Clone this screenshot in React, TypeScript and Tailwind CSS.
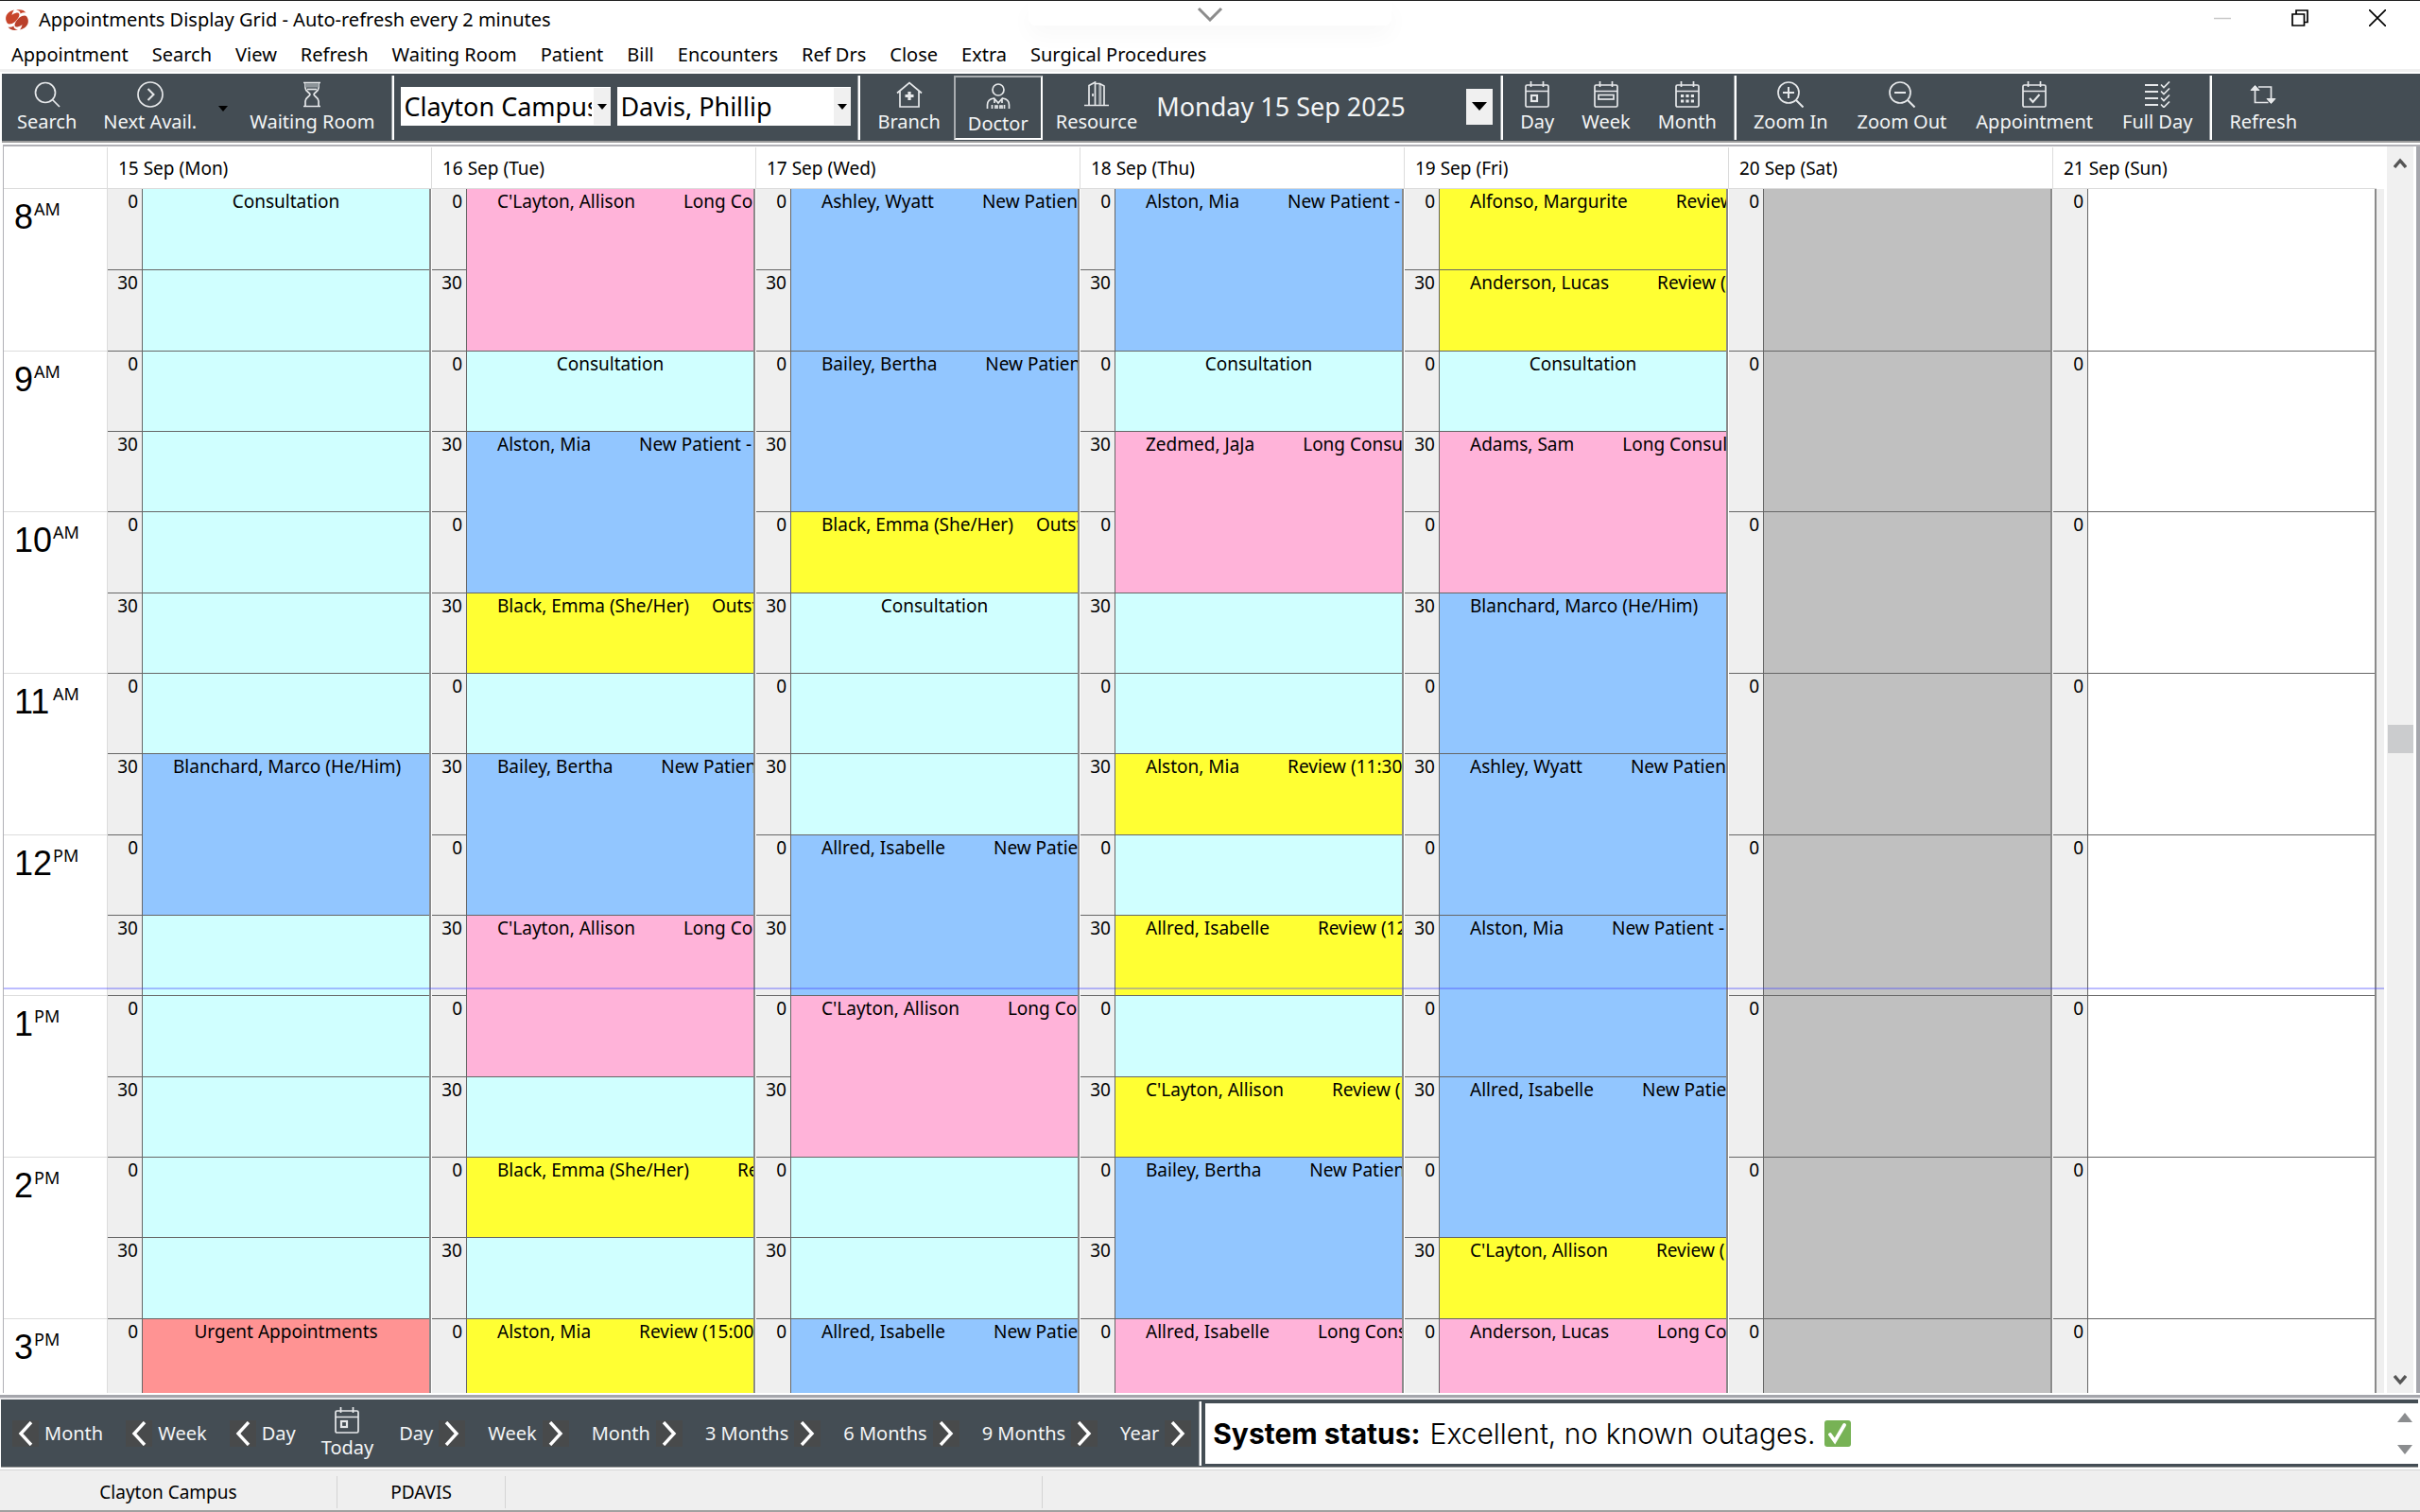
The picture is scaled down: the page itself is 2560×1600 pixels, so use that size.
import type { ReactNode } from "react";

type Tone = "open" | "long" | "new" | "review" | "urgent" | "closed" | "blank";

interface Slot {
  span: number;
  tone: Tone;
  title?: string;
  name?: string;
  type?: string;
}

interface Day {
  label: string;
  step: number;
  slots: Slot[];
}

const toneClass: Record<Tone, string> = {
  open: "bg-[#d0ffff]",
  long: "bg-[#ffb3d9]",
  new: "bg-[#92c6ff]",
  review: "bg-[#ffff33]",
  urgent: "bg-[#ff9393]",
  closed: "bg-[#c0c0c0]",
  blank: "bg-white",
};

const open = (title?: string): Slot => ({ span: 1, tone: "open", title });
const longConsult = (name: string, span = 2): Slot => ({
  span,
  tone: "long",
  name,
  type: "Long Consultation",
});
const newPatient = (name: string, type = "New Patient - Consult", span = 2): Slot => ({
  span,
  tone: "new",
  name,
  type,
});
const review = (name: string, type: string): Slot => ({
  span: 1,
  tone: "review",
  name,
  type,
});
const hours = (tone: Tone): Slot[] =>
  [2, 2, 2, 2, 2, 2, 2, 1].map((span) => ({ span, tone }));

const days: Day[] = [
  {
    label: "15 Sep (Mon)",
    step: 1,
    slots: [
      open("Consultation"),
      open(),
      open(),
      open(),
      open(),
      open(),
      open(),
      newPatient("Blanchard, Marco (He/Him)", ""),
      open(),
      open(),
      open(),
      open(),
      open(),
      { span: 1, tone: "urgent", title: "Urgent Appointments" },
    ],
  },
  {
    label: "16 Sep (Tue)",
    step: 1,
    slots: [
      longConsult("C'Layton, Allison"),
      open("Consultation"),
      newPatient("Alston, Mia"),
      review("Black, Emma (She/Her)", "Outstanding"),
      open(),
      newPatient("Bailey, Bertha"),
      longConsult("C'Layton, Allison"),
      open(),
      review("Black, Emma (She/Her)", "Review (14:00)"),
      open(),
      review("Alston, Mia", "Review (15:00)"),
    ],
  },
  {
    label: "17 Sep (Wed)",
    step: 1,
    slots: [
      newPatient("Ashley, Wyatt"),
      newPatient("Bailey, Bertha"),
      review("Black, Emma (She/Her)", "Outstanding"),
      open("Consultation"),
      open(),
      open(),
      newPatient("Allred, Isabelle"),
      longConsult("C'Layton, Allison"),
      open(),
      open(),
      newPatient("Allred, Isabelle", "New Patient", 1),
    ],
  },
  {
    label: "18 Sep (Thu)",
    step: 1,
    slots: [
      newPatient("Alston, Mia"),
      open("Consultation"),
      longConsult("Zedmed, JaJa"),
      open(),
      open(),
      review("Alston, Mia", "Review (11:30)"),
      open(),
      review("Allred, Isabelle", "Review (12:30)"),
      open(),
      review("C'Layton, Allison", "Review (13:30)"),
      newPatient("Bailey, Bertha"),
      longConsult("Allred, Isabelle", 1),
    ],
  },
  {
    label: "19 Sep (Fri)",
    step: 1,
    slots: [
      review("Alfonso, Margurite", "Review (8:00)"),
      review("Anderson, Lucas", "Review (8:30)"),
      open("Consultation"),
      longConsult("Adams, Sam"),
      newPatient("Blanchard, Marco (He/Him)", ""),
      newPatient("Ashley, Wyatt"),
      newPatient("Alston, Mia"),
      newPatient("Allred, Isabelle"),
      review("C'Layton, Allison", "Review (14:30)"),
      longConsult("Anderson, Lucas", 1),
    ],
  },
  { label: "20 Sep (Sat)", step: 2, slots: hours("closed") },
  { label: "21 Sep (Sun)", step: 2, slots: hours("blank") },
];

const hourLabels = [
  ["8", "AM"],
  ["9", "AM"],
  ["10", "AM"],
  ["11", "AM"],
  ["12", "PM"],
  ["1", "PM"],
  ["2", "PM"],
  ["3", "PM"],
];

const menus = [
  "Appointment",
  "Search",
  "View",
  "Refresh",
  "Waiting Room",
  "Patient",
  "Bill",
  "Encounters",
  "Ref Drs",
  "Close",
  "Extra",
  "Surgical Procedures",
];

/* ---------- icons ---------- */

function Icon({ children }: { children: ReactNode }) {
  return (
    <svg
      viewBox="0 0 28 28"
      className="size-7 shrink-0"
      fill="none"
      stroke="#e6e8ea"
      strokeWidth="1.7"
      aria-hidden="true"
    >
      {children}
    </svg>
  );
}

const SearchIcon = () => (
  <Icon>
    <circle cx="12" cy="12" r="10.5" />
    <path d="M19.5 19.5 27 27" />
  </Icon>
);

const NextIcon = () => (
  <Icon>
    <circle cx="14" cy="14" r="13" />
    <path d="m11.500 8 6 6-6 6" strokeWidth="2" />
  </Icon>
);

const HourglassIcon = () => (
  <Icon>
    <path d="M5 1.500h18M5 26.500h18M7 2v5c0 4 5 5 5 7s-5 3-5 7v5M21 2v5c0 4-5 5-5 7s5 3 5 7v5" />
    <path d="M7 2h14v4.500H7z" fill="#8d9499" stroke="none" />
    <path d="M9 8.500h10" />
  </Icon>
);

const BranchIcon = () => (
  <Icon>
    <path d="M1 12.500 14 1.500l13 11M4 10.500V27h20V10.500" />
    <path d="M14 11v9M9.500 15.500h9" strokeWidth="3.200" />
  </Icon>
);

const DoctorIcon = () => (
  <Icon>
    <circle cx="14" cy="7" r="6" />
    <path d="M2.500 27v-4c0-4 3-6.500 7-7l4.500 5 4.500-5c4 .5 7 3 7 7v4M7.500 27v-4M20.500 27v-4M10 17v4M18 17v4M11 27v-3h2v3M16 27v-3h2v3" />
  </Icon>
);

const ResourceIcon = () => (
  <Icon>
    <path d="M1 25.500h26M6 25V4.500L12.500 1v24.500M12.500 2.500h5L22 5v20M17.500 2.500V25M10 13v3" />
    <path d="M18 4v21" strokeWidth="2.500" stroke="#a9afb3" />
  </Icon>
);

function CalendarBase({ children }: { children: ReactNode }) {
  return (
    <Icon>
      <rect x="2" y="4" width="24" height="23" rx="1.500" />
      <path d="M2 10.500h24M7.500 0v6M20.500 0v6" />
      {children}
    </Icon>
  );
}

const DayIcon = () => (
  <CalendarBase>
    <rect x="8" y="15" width="6" height="6" strokeWidth="2.200" />
  </CalendarBase>
);

const WeekIcon = () => (
  <CalendarBase>
    <rect x="6" y="14.500" width="16" height="4.500" />
  </CalendarBase>
);

const MonthIcon = () => (
  <CalendarBase>
    <path d="M7 15.500h14M7 21h14" strokeWidth="3.200" strokeDasharray="3.200 2.200" />
  </CalendarBase>
);

const AppointmentIcon = () => (
  <CalendarBase>
    <path d="m9 18 3.500 4 7-8" strokeWidth="2" />
  </CalendarBase>
);

const ZoomIcon = ({ plus = false }: { plus?: boolean }) => (
  <Icon>
    <circle cx="12" cy="12" r="11" />
    <path d="M20 20l7.500 7.500" strokeWidth="2" />
    <path d={plus ? "M6 12h12M12 6v12" : "M6 12h12"} strokeWidth="2" />
  </Icon>
);

const FullDayIcon = () => (
  <Icon>
    <path d="M1 4h14M1 11h14M1 18h14M1 25h14" strokeWidth="2.200" />
    <path d="m18 3.500 3 3 6-6M18 10.500l3 3 6-6M18 17.500l3 3 6-6M18 24.500l3 3 6-6" />
  </Icon>
);

const RefreshIcon = () => (
  <Icon>
    <path d="M5.500 6v16.500h14M9 6h13.500V22" />
    <path d="M1 9.500 5.500 4.500 10 9.500zM18 18.500l4.500 5 4.500-5z" fill="#e6e8ea" strokeWidth="1" />
  </Icon>
);

function Chevron({ back = false }: { back?: boolean }) {
  return (
    <span className="grid size-7 shrink-0 place-items-center bg-[#484a4b]">
      <svg viewBox="0 0 16 26" className="h-[26px] w-4" fill="none" stroke="#fff" strokeWidth="3.400">
        <path d={back ? "M14 1 3 13l11 12" : "M2 1l11 12L2 25"} />
      </svg>
    </span>
  );
}

function AppLogo() {
  return (
    <svg viewBox="0 0 28 24" className="h-6 w-7" aria-hidden="true">
      <path
        d="M11 1.500C4 3 1 8 2.500 13c.7 2.500 2 3.500 3.500 3.500 4 0 7-3 9.500-7C17 7 17 4 13.500 4.500c-2 .3-4 1.500-5 2.500C9 4.500 10 2.500 11 1.500z"
        fill="#c8452b"
      />
      <path
        d="M17 22.500c7-1.500 10-6.500 8.500-11.500C24.800 8.500 23.500 7.500 22 7.500c-4 0-7 3-9.500 7-1.500 2.500-1.500 5.500 2 5 2-.3 4-1.500 5-2.500-.5 2.500-1.500 4.500-2.500 5.500z"
        fill="#b93f2a"
      />
      <path d="M13 1.500c5-1 8.500 0 10.500 3-2-.5-4-.3-6 1C17.500 3 16 1.800 13 1.500z" fill="#c8452b" />
      <path d="M15 22.500c-5 1-8.500 0-10.500-3 2 .5 4 .3 6-1 0 2.500 1.500 3.700 4.500 4z" fill="#b93f2a" />
    </svg>
  );
}

/* ---------- toolbar pieces ---------- */

function ToolButton({
  icon,
  label,
  active = false,
}: {
  icon: ReactNode;
  label: string;
  active?: boolean;
}) {
  return (
    <button
      type="button"
      className={
        active
          ? "flex h-[68px] flex-col items-center border-2 border-t-[#a9adb0] border-r-white border-b-white border-l-[#a9adb0] px-[13px] pt-1.5 text-xl leading-6"
          : "flex h-[68px] flex-col items-center px-3.5 pt-1.5 text-xl leading-6"
      }
    >
      {icon}
      <span className="mt-[3px] whitespace-nowrap">{label}</span>
    </button>
  );
}

function Separator() {
  return <div className="mx-1 h-[68px] w-[3px] shrink-0 border-l border-[#9aa0a4] bg-white" />;
}

function Combo({ label, value, className }: { label: string; value: string; className: string }) {
  return (
    <label className={`relative block h-[41px] shrink-0 overflow-hidden bg-white ${className}`}>
      <span className="sr-only">{label}</span>
      <select
        defaultValue={value}
        className="h-full w-full appearance-none bg-white pl-[3px] pr-5 text-[27px] leading-[40px] text-black outline-none"
      >
        <option>{value}</option>
      </select>
      <span className="pointer-events-none absolute inset-y-px right-0 grid w-[18px] place-items-center bg-[#f0f0f0]">
        <svg viewBox="0 0 10 6" className="h-1.5 w-2.5">
          <path d="M0 0h10L5 6z" fill="#000" />
        </svg>
      </span>
    </label>
  );
}

function NavButton({ label, back = false }: { label: string; back?: boolean }) {
  return (
    <button type="button" className="flex items-center gap-1.5 px-3 text-xl leading-6 whitespace-nowrap">
      {back && <Chevron back />}
      {label}
      {!back && <Chevron />}
    </button>
  );
}

/* ---------- calendar ---------- */

function Appointment({ slot, first }: { slot: Slot; first: boolean }) {
  const row = slot.span === 2 ? "row-span-2" : "row-span-1";
  const line = first ? "" : "border-t border-[#666]";
  return (
    <div className={`min-w-0 overflow-hidden pt-px whitespace-nowrap ${row} ${line} ${toneClass[slot.tone]}`}>
      {slot.title && <p className="text-center">{slot.title}</p>}
      {slot.name && (
        <p className={slot.type === "Outstanding" ? "flex gap-6 pl-8" : "flex gap-[51px] pl-8"}>
          <span className="shrink-0">{slot.name}</span>
          {slot.type && <span className="min-w-0 flex-1 overflow-hidden">{slot.type}</span>}
        </p>
      )}
    </div>
  );
}

function DayColumn({ day, first }: { day: Day; first: boolean }) {
  const marks = day.step === 2 ? hours("blank") : Array.from({ length: 15 }, () => ({ span: 1 }));
  return (
    <div
      className={`flex min-w-0 flex-1 border-r-2 border-l border-r-[#8a8a8a] ${first ? "border-l-[#dcdcdc]" : "border-l-white"}`}
    >
      <div className="grid w-[37px] shrink-0 grid-rows-[repeat(15,minmax(0,1fr))] border-r border-[#666] bg-[#efefef]">
        {marks.map((mark, i) => (
          <div
            key={i}
            className={`pt-px pr-1 text-right ${mark.span === 2 ? "row-span-2" : "row-span-1"} ${i ? "border-t border-[#666]" : ""}`}
          >
            {day.step === 1 && i % 2 ? "30" : "0"}
          </div>
        ))}
      </div>
      <div className="grid min-w-0 flex-1 grid-rows-[repeat(15,minmax(0,1fr))]">
        {day.slots.map((slot, i) => (
          <Appointment key={i} slot={slot} first={i === 0} />
        ))}
      </div>
    </div>
  );
}

function ScrollArrow({ down = false }: { down?: boolean }) {
  return (
    <svg viewBox="0 0 14 12" className="h-3 w-3.5" fill="none" stroke="#555" strokeWidth="3.400">
      <path d={down ? "M1 2l6 7 6-7" : "M1 10l6-7 6 7"} />
    </svg>
  );
}

function Calendar() {
  return (
    <main className="ml-[3px] flex min-h-0 flex-1 border-t-2 border-l border-[#b0b0b6] bg-white text-[19px]">
      <div className="flex min-w-0 flex-1 flex-col">
        {/* Day headings */}
        <div className="mr-2 flex h-[45px] shrink-0 border-b border-[#dcdcdc] pt-px">
          <div className="w-[109px] shrink-0" />
          {days.map((day) => (
            <div key={day.label} className="flex flex-1 items-center border-l border-[#dcdcdc] pl-[11px]">
              {day.label}
            </div>
          ))}
        </div>

        {/* Time grid */}
        <div className="min-h-0 flex-1 overflow-hidden">
          <div className="relative flex h-[1280px]">
            <div className="grid w-[109px] shrink-0 grid-rows-[repeat(15,minmax(0,1fr))]">
              {hourLabels.map(([hour, half], i) => (
                <div
                  key={hour}
                  className={`flex items-start pt-[9px] pl-[11px] ${i < 7 ? "row-span-2" : "row-span-1"} ${i ? "border-t border-[#dcdcdc]" : ""}`}
                >
                  <span
                    className={`font-['Liberation_Sans',Arial,sans-serif] text-[36px] leading-[42px] ${hour.length === 2 ? "w-[41px]" : "w-[21px]"}`}
                  >
                    {hour}
                  </span>
                  <span className="text-lg leading-6">{half}</span>
                </div>
              ))}
            </div>
            {days.map((day, i) => (
              <DayColumn key={day.label} day={day} first={i === 0} />
            ))}
            <div className="w-2 shrink-0 bg-[#efefef]" />
            {/* Current time marker */}
            <div className="absolute inset-x-0 top-[845px] h-0.5 bg-[#4040ff]/35" />
          </div>
        </div>
      </div>

      {/* Vertical scroll bar */}
      <div className="ml-[3px] flex w-7 shrink-0 flex-col items-center bg-[#f0f0f0] pt-3 pb-2">
        <ScrollArrow />
        <div className="flex-[588]" />
        <div className="h-[30px] w-[27px] bg-[#cbccce]" />
        <div className="flex-[656]" />
        <ScrollArrow down />
      </div>
      <div className="w-[7px] shrink-0 border-r-4 border-l-2 border-l-white border-r-[#a5a6ac]" />
    </main>
  );
}

/* ---------- window ---------- */

export default function App() {
  return (
    <div className="flex h-screen flex-col overflow-hidden border-t border-[#222] bg-white font-['Noto_Sans','Segoe_UI',sans-serif] text-xl leading-6 text-black">
      {/* Title bar */}
      <header className="relative flex h-[41px] shrink-0 items-center pb-px pl-1">
        <AppLogo />
        <h1 className="ml-[9px]">Appointments Display Grid - Auto-refresh every 2 minutes</h1>
        <div className="absolute top-0 left-1/2 flex h-[26px] w-96 -translate-x-1/2 justify-center rounded-b-lg shadow-[0_10px_24px_rgba(0,0,0,0.03)]">
          <svg viewBox="0 0 28 16" className="mt-1.5 h-4 w-7" fill="none" stroke="#8c8c8c" strokeWidth="3">
            <path d="M2 2l12 12L26 2" />
          </svg>
        </div>
        <div className="ml-auto flex items-center pr-9 pb-1">
          <button type="button" aria-label="Minimize" className="mr-16">
            <svg viewBox="0 0 18 18" className="size-[18px]" stroke="#c8c8c8" strokeWidth="1.500">
              <path d="M0 9.500h18" />
            </svg>
          </button>
          <button type="button" aria-label="Restore" className="mr-16">
            <svg viewBox="0 0 18 18" className="size-[18px]" fill="none" stroke="#000" strokeWidth="1.700">
              <path d="M1 5h12.500v12H1zM5 5V1h12v12.500h-3.500" />
            </svg>
          </button>
          <button type="button" aria-label="Close">
            <svg viewBox="0 0 18 18" className="size-[18px]" stroke="#000" strokeWidth="1.600">
              <path d="M0 0l18 18M18 0 0 18" />
            </svg>
          </button>
        </div>
      </header>

      {/* Menu bar */}
      <nav className="flex h-[31px] shrink-0 items-center gap-[25px] pl-3 whitespace-nowrap">
        {menus.map((menu) => (
          <button key={menu} type="button">
            {menu}
          </button>
        ))}
      </nav>
      <div className="h-[5px] shrink-0 border-t-[3px] border-[#f0f0f0]" />

      {/* Toolbar */}
      <div className="ml-0.5 flex h-[73px] shrink-0 border-b-2 border-[#9c9c9c] bg-[#444d54] pt-0.5 pl-0.5 text-[#f3f5f6]">
        <ToolButton icon={<SearchIcon />} label="Search" />
        <ToolButton icon={<NextIcon />} label="Next Avail." />
        <button type="button" aria-label="Next available options" className="flex w-7 items-center justify-center">
          <svg viewBox="0 0 10 6" className="h-1.5 w-2.5">
            <path d="M0 0h10L5 6z" fill="#000" />
          </svg>
        </button>
        <ToolButton icon={<HourglassIcon />} label="Waiting Room" />
        <Separator />
        <div className="flex w-[482px] shrink-0 gap-[7px] pt-3 pl-[3px]">
          <Combo label="Branch" value="Clayton Campus" className="w-[222px]" />
          <Combo label="Doctor" value="Davis, Phillip" className="w-[247px]" />
        </div>
        <Separator />
        <ToolButton icon={<BranchIcon />} label="Branch" />
        <ToolButton icon={<DoctorIcon />} label="Doctor" active />
        <ToolButton icon={<ResourceIcon />} label="Resource" />
        <div className="flex w-[362px] shrink-0 items-center justify-between pb-1 pl-1.5 text-[27px] leading-9">
          <span>Monday 15 Sep 2025</span>
          <button type="button" aria-label="Pick a date" className="grid h-[38px] w-7 place-items-center bg-[#f0f0f0]">
            <svg viewBox="0 0 16 9" className="h-[9px] w-4">
              <path d="M0 0h16L8 9z" fill="#000" />
            </svg>
          </button>
        </div>
        <div className="ml-1 flex">
          <Separator />
          <div className="flex gap-px">
            <ToolButton icon={<DayIcon />} label="Day" />
            <ToolButton icon={<WeekIcon />} label="Week" />
            <ToolButton icon={<MonthIcon />} label="Month" />
          </div>
          <Separator />
          <div className="flex gap-[3px]">
            <ToolButton icon={<ZoomIcon plus />} label="Zoom In" />
            <ToolButton icon={<ZoomIcon />} label="Zoom Out" />
            <ToolButton icon={<AppointmentIcon />} label="Appointment" />
            <ToolButton icon={<FullDayIcon />} label="Full Day" />
          </div>
          <Separator />
          <ToolButton icon={<RefreshIcon />} label="Refresh" />
        </div>
      </div>
      <div className="h-0.5 shrink-0" />

      <Calendar />

      {/* Bottom navigation */}
      <div className="mt-0.5 h-[5px] shrink-0 border-t-[3px] border-[#a5a6ac] bg-[#e8e8ea]" />
      <div className="mr-0.5 ml-px flex h-[72px] shrink-0 border-b border-[#9c9c9c] bg-[#444d54] text-[#f3f5f6]">
        <NavButton label="Month" back />
        <NavButton label="Week" back />
        <NavButton label="Day" back />
        <button type="button" className="flex flex-col items-center px-[15px] pt-2 text-xl leading-6">
          <DayIcon />
          <span className="mt-[3px]">Today</span>
        </button>
        <NavButton label="Day" />
        <NavButton label="Week" />
        <NavButton label="Month" />
        <NavButton label="3 Months" />
        <NavButton label="6 Months" />
        <NavButton label="9 Months" />
        <NavButton label="Year" />
        <div className="-ml-2 flex min-w-0 flex-1 items-center">
          <Separator />
          <div className="flex h-16 flex-1 items-center bg-white pl-2 font-['Inter',sans-serif] text-[30px] leading-8 text-black">
            <p className="flex items-center gap-2.5 whitespace-nowrap">
              <strong className="font-bold">System status:</strong>
              <span className="font-light">Excellent, no known outages.</span>
              <svg viewBox="0 0 28 28" className="size-7" aria-hidden="true">
                <rect width="28" height="28" rx="3" fill="#77b255" />
                <path d="m6 15 5 7L21 5" fill="none" stroke="#fff" strokeWidth="3.800" strokeLinecap="round" />
              </svg>
            </p>
            <div className="mr-1.5 ml-auto flex h-full flex-col items-center justify-between py-2.5">
              <svg viewBox="0 0 16 10" className="h-2.5 w-4">
                <path d="M0 10h16L8 0z" fill="#8b8d8f" />
              </svg>
              <svg viewBox="0 0 16 10" className="h-2.5 w-4">
                <path d="M0 0h16L8 10z" fill="#8b8d8f" />
              </svg>
            </div>
          </div>
        </div>
      </div>

      {/* Status bar */}
      <footer className="mt-0.5 flex h-[45px] shrink-0 items-stretch border-t border-b-2 border-t-[#d4d4d4] border-b-[#a0a0a0] bg-[#efefef] pt-1.5 pb-0.5 text-center text-[19px]">
        <div className="flex w-[357px] items-center justify-center border-r border-[#d4d4d4]">Clayton Campus</div>
        <div className="flex w-[178px] items-center justify-center border-r border-[#d4d4d4]">PDAVIS</div>
        <div className="w-[568px] border-r border-[#d4d4d4]" />
      </footer>
    </div>
  );
}
